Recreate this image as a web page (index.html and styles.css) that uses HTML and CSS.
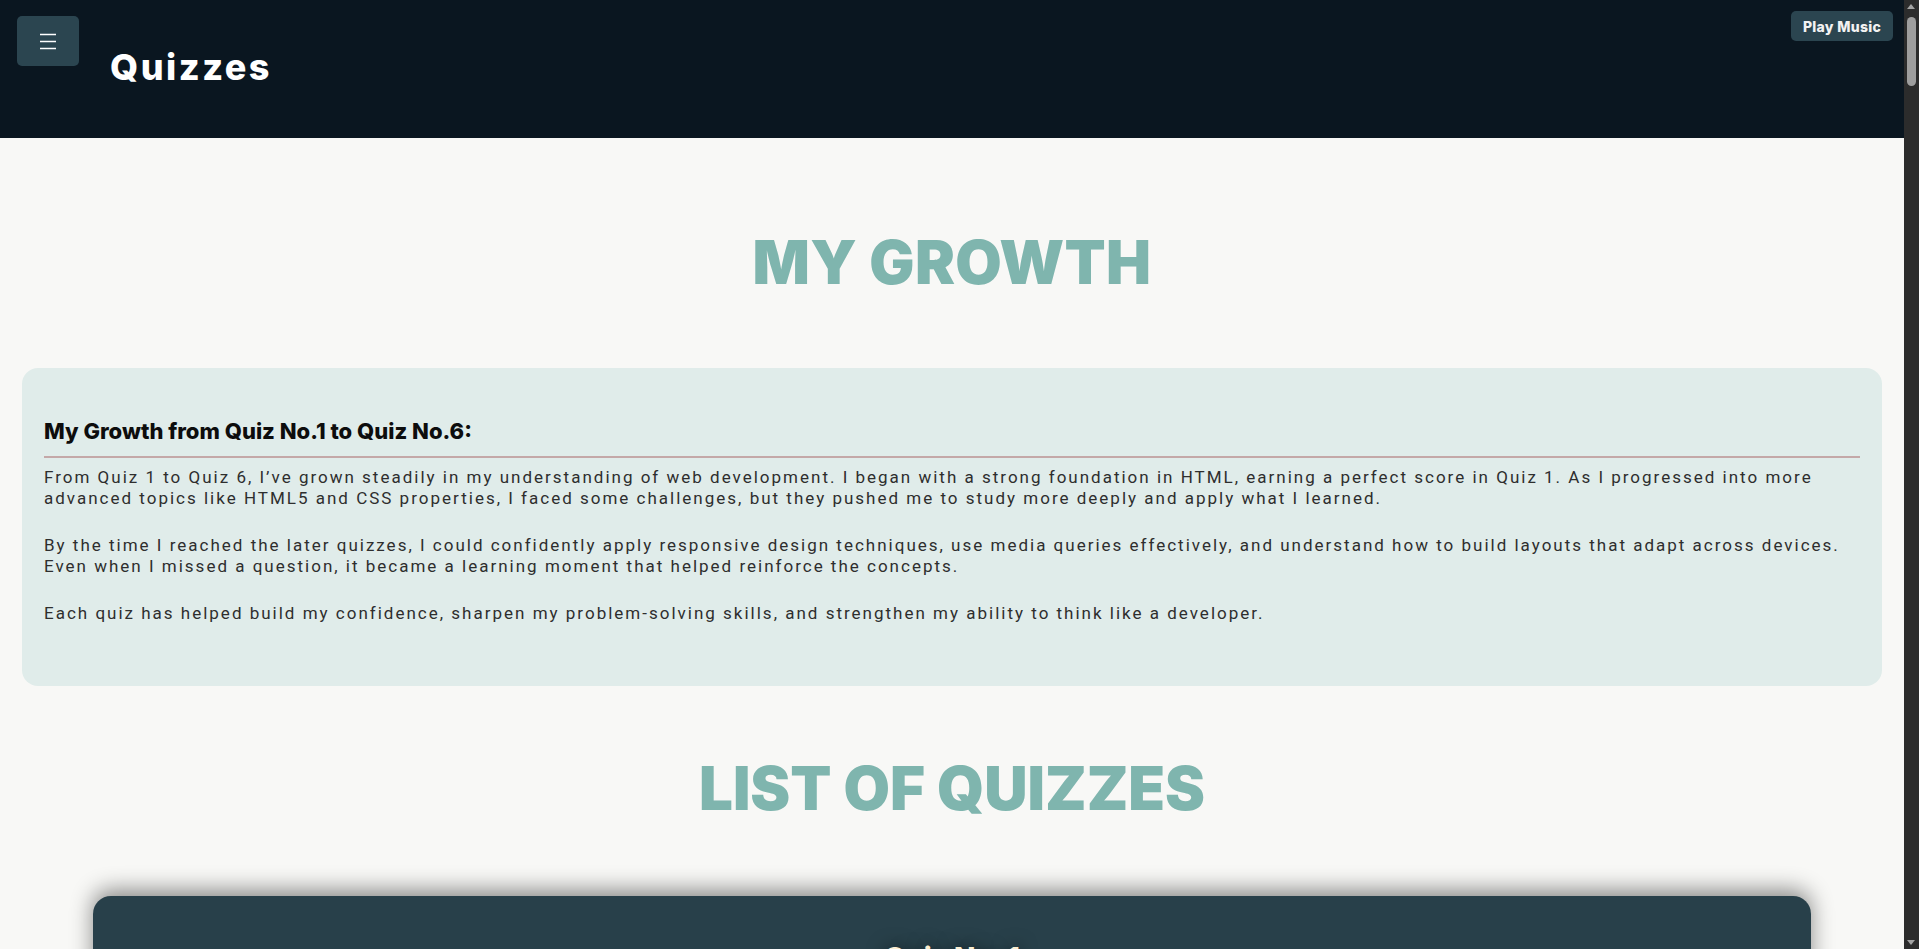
FILE: index.html
```html
<!DOCTYPE html>
<html lang="en">
<head>
<meta charset="utf-8">
<title>Quizzes</title>
<link rel="stylesheet" href="styles.css">
</head>
<body>
<header class="topbar">
  <button class="menu-btn" aria-label="Menu">
    <svg width="18" height="17" viewBox="0 0 18 17"><path d="M1 1.5h16M1 8.5h16M1 15.5h16" stroke="#ffffff" stroke-width="1.6" fill="none"/></svg>
  </button>
  <h1 class="site-title">Quizzes</h1>
  <button class="music-btn">Play Music</button>
</header>

<main class="content">
  <h2 class="section-title">MY GROWTH</h2>
  <section class="growth-card">
    <h3 class="growth-heading">My Growth from Quiz No.1 to Quiz No.6:</h3>
    <hr class="divider">
    <p class="growth-text">From Quiz 1 to Quiz 6, I’ve grown steadily in my understanding of web development. I began with a strong foundation in HTML, earning a perfect score in Quiz 1. As I progressed into more advanced topics like HTML5 and CSS properties, I faced some challenges, but they pushed me to study more deeply and apply what I learned.</p>
    <p class="growth-text">By the time I reached the later quizzes, I could confidently apply responsive design techniques, use media queries effectively, and understand how to build layouts that adapt across devices. Even when I missed a question, it became a learning moment that helped reinforce the concepts.</p>
    <p class="growth-text">Each quiz has helped build my confidence, sharpen my problem-solving skills, and strengthen my ability to think like a developer.</p>
  </section>

  <h2 class="section-title list-title">LIST OF QUIZZES</h2>
  <div class="quiz-list">
    <article class="quiz-card"><h3 class="quiz-name">Quiz No. 1</h3><div class="quiz-body"></div></article>
    <article class="quiz-card"><h3 class="quiz-name">Quiz No. 2</h3><div class="quiz-body"></div></article>
    <article class="quiz-card"><h3 class="quiz-name">Quiz No. 3</h3><div class="quiz-body"></div></article>
    <article class="quiz-card"><h3 class="quiz-name">Quiz No. 4</h3><div class="quiz-body"></div></article>
    <article class="quiz-card"><h3 class="quiz-name">Quiz No. 5</h3><div class="quiz-body"></div></article>
    <article class="quiz-card"><h3 class="quiz-name">Quiz No. 6</h3><div class="quiz-body"></div></article>
  </div>
</main>

<div class="fake-scrollbar" aria-hidden="true">
  <span class="sb-arrow sb-up"></span>
  <span class="sb-thumb"></span>
  <span class="sb-arrow sb-down"></span>
</div>
</body>
</html>
```

FILE: styles.css
```css
html, body {
  padding: 0;
}

html {
  margin: 0;
}

body {
  margin: 0 15px 0 0;
  background: #f8f8f6;
  color: #2b2b2b;
  font-family: "Inter", "Noto Sans", sans-serif;
}

.topbar {
  height: 138px;
  background: #0a1620;
  display: flex;
  align-items: center;
  padding-left: 110px;
  box-sizing: border-box;
}

.menu-btn {
  position: fixed;
  top: 16px;
  left: 17px;
  width: 62px;
  height: 50px;
  border: none;
  border-radius: 5px;
  background: #2b4550;
  display: flex;
  align-items: center;
  justify-content: center;
  padding: 0;
  z-index: 10;
}

.site-title {
  margin: -4px 0 0;
  color: #ffffff;
  font-family: "Inter", sans-serif;
  font-weight: 800;
  font-size: 36px;
  letter-spacing: 2.5px;
  line-height: 40px;
}

.music-btn {
  position: fixed;
  top: 11px;
  right: 26px;
  width: 102px;
  height: 30px;
  border: none;
  border-radius: 5px;
  background: #2b4550;
  color: #f2f2f2;
  font-family: "Inter", sans-serif;
  font-weight: 800;
  font-size: 14px;
  letter-spacing: 0.3px;
  padding: 0;
  z-index: 10;
}

.content {
  padding-top: 88px;
}

.section-title {
  margin: 0;
  text-align: center;
  color: #7fb5ae;
  font-family: "Inter", sans-serif;
  font-weight: 900;
  font-size: 60px;
  line-height: 72px;
  letter-spacing: 0.3px;
}

.growth-card {
  margin: 70px 22px 0;
  background: #e0ecea;
  border-radius: 16px;
  padding: 50px 22px 62px;
}

.growth-heading {
  margin: 0;
  color: #0d0d0d;
  font-family: "Inter", sans-serif;
  font-weight: 800;
  font-size: 22px;
  line-height: 26px;
  letter-spacing: 0;
}

.divider {
  margin: 12px 0 9px;
  border: none;
  height: 2px;
  background: #c4a8a8;
}

.growth-text {
  margin: 0 0 26px;
  font-family: "Roboto", sans-serif;
  font-size: 17px;
  line-height: 21px;
  letter-spacing: 2px;
  color: #2e2e2e;
}

.growth-text:last-child {
  margin-bottom: 0;
}

.list-title {
  margin-top: 66px;
  letter-spacing: 0;
}

.quiz-list {
  display: flex;
  flex-direction: column;
  gap: 80px;
  margin: 72px 93px 80px;
}

.quiz-card {
  background: #28404a;
  border-radius: 18px;
  box-shadow: 0 -6px 22px rgba(0, 0, 0, 0.45);
  padding: 45px 40px 60px;
}

.quiz-name {
  margin: 0;
  text-align: center;
  color: #fbeed2;
  font-family: "Inter", sans-serif;
  font-weight: 800;
  font-size: 28px;
  line-height: 34px;
  text-shadow: 0 0 18px rgba(0, 0, 0, 0.6);
}

.quiz-body {
  height: 1600px;
}

.fake-scrollbar {
  position: fixed;
  top: 0;
  right: 0;
  width: 15px;
  height: 100%;
  background: #2c2c2c;
  z-index: 20;
}

.sb-thumb {
  position: absolute;
  top: 17px;
  left: 3px;
  width: 9px;
  height: 69px;
  border-radius: 5px;
  background: #9e9e9e;
}

.sb-arrow {
  position: absolute;
  left: 3px;
  width: 0;
  height: 0;
  border-left: 4.5px solid transparent;
  border-right: 4.5px solid transparent;
}

.sb-up {
  top: 4px;
  border-bottom: 5px solid #a3a3a3;
}

.sb-down {
  bottom: 4px;
  border-top: 5px solid #a3a3a3;
}
```
